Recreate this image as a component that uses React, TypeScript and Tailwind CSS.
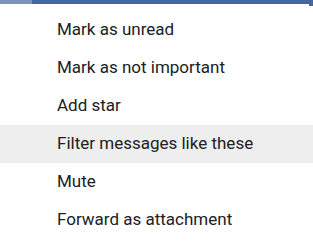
export default function App() {
  const items = [
    'Mark as unread',
    'Mark as not important',
    'Add star',
    'Filter messages like these',
    'Mute',
    'Forward as attachment',
  ]
  return (
    <div className="w-[313px] h-[248px] bg-white overflow-hidden relative" style={{ fontFamily: 'Roboto, sans-serif' }}>
      <div className="flex h-[4px]">
        <div className="w-[32px] bg-[#7d93bf]" />
        <div className="flex-1 bg-[#4266a6]" />
      </div>
      <div className="absolute right-0 top-0 w-[4px] h-[6px] bg-[#4266a6]" />
      <div className="pt-[7px]">
        {items.map((t, i) => (
          <div
            key={t}
            className={`h-[38px] flex items-center pl-[57px] text-[17px] text-[#202124] ${i === 3 ? 'bg-[#eeeeee]' : ''}`}
          >
            {t}
          </div>
        ))}
      </div>
    </div>
  )
}
